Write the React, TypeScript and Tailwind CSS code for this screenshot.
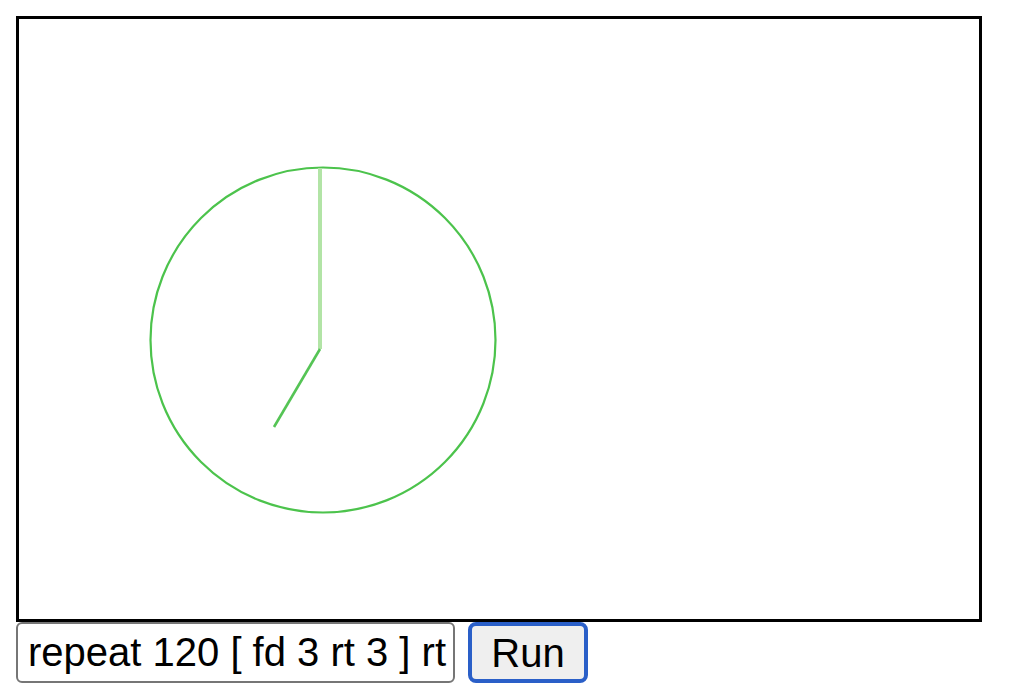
export default function App() {
  return (
    <div className="p-4 bg-white min-h-screen font-['Liberation_Sans',Arial,sans-serif]">
      <div className="w-[966px] h-[606px] border-[3px] border-black">
        <svg width="960" height="600" viewBox="0 0 960 600">
          <circle cx="304" cy="321" r="172.5" fill="none" stroke="#4cc34c" strokeWidth="2.2" />
          <line x1="301" y1="149" x2="301" y2="330" stroke="#b2e4a6" strokeWidth="4" />
          <line x1="301" y1="330" x2="255" y2="408" stroke="#55c455" strokeWidth="2.6" />
        </svg>
      </div>
      <div className="flex items-center gap-[13px]">
        <input
          type="text"
          defaultValue="repeat 120 [ fd 3 rt 3 ] rt 90"
          className="w-[439px] h-[61px] border-2 border-[#767676] rounded-[6px] pl-[10px] pr-1 text-[40px] text-black outline-none"
        />
        <button className="w-[120px] h-[61px] border-4 border-[#2a5fc8] rounded-[8px] bg-[#efefef] text-[40px] text-black leading-none">
          Run
        </button>
      </div>
    </div>
  );
}
